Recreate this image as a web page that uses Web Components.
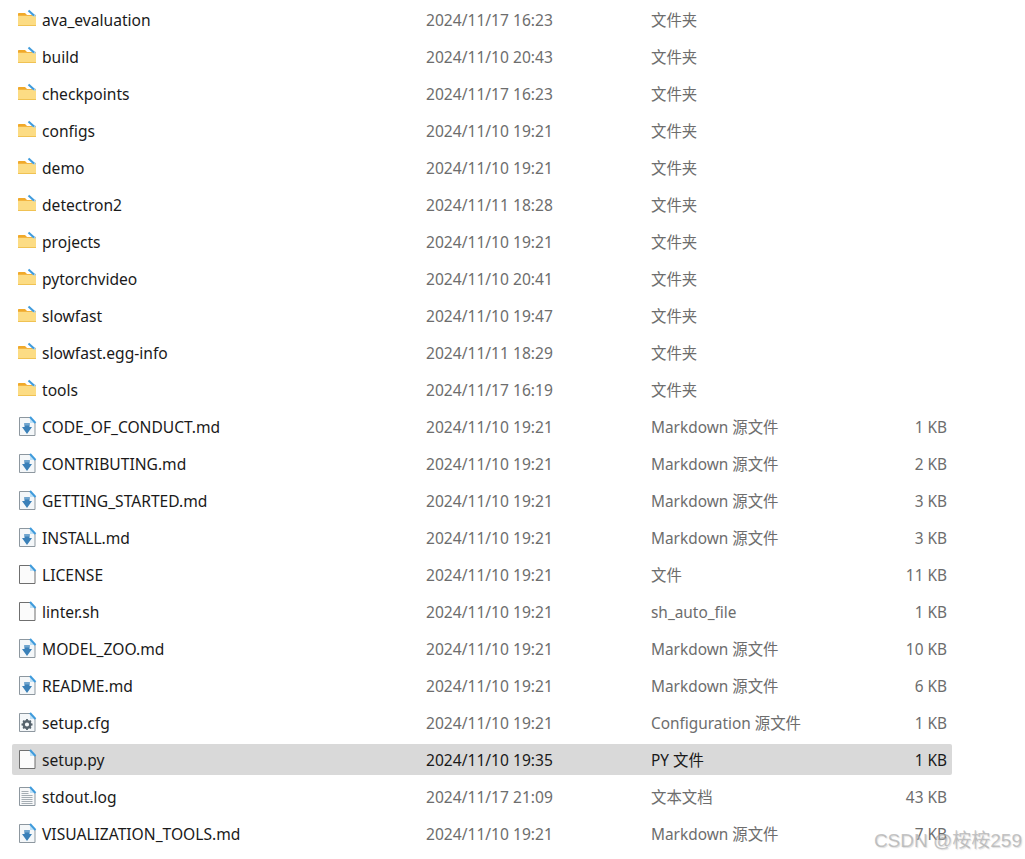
<!DOCTYPE html>
<html>
<head>
<meta charset="utf-8">
<title>files</title>
<style>
  html, body { margin: 0; background: #fff; }
  body { width: 1025px; height: 859px; overflow: hidden; position: relative; }
</style>
</head>
<body>
<file-list>
  <file-row icon="folder" name="ava_evaluation" date="2024/11/17 16:23" type="文件夹"></file-row>
  <file-row icon="folder" name="build" date="2024/11/10 20:43" type="文件夹"></file-row>
  <file-row icon="folder" name="checkpoints" date="2024/11/17 16:23" type="文件夹"></file-row>
  <file-row icon="folder" name="configs" date="2024/11/10 19:21" type="文件夹"></file-row>
  <file-row icon="folder" name="demo" date="2024/11/10 19:21" type="文件夹"></file-row>
  <file-row icon="folder" name="detectron2" date="2024/11/11 18:28" type="文件夹"></file-row>
  <file-row icon="folder" name="projects" date="2024/11/10 19:21" type="文件夹"></file-row>
  <file-row icon="folder" name="pytorchvideo" date="2024/11/10 20:41" type="文件夹"></file-row>
  <file-row icon="folder" name="slowfast" date="2024/11/10 19:47" type="文件夹"></file-row>
  <file-row icon="folder" name="slowfast.egg-info" date="2024/11/11 18:29" type="文件夹"></file-row>
  <file-row icon="folder" name="tools" date="2024/11/17 16:19" type="文件夹"></file-row>
  <file-row icon="md" name="CODE_OF_CONDUCT.md" date="2024/11/10 19:21" type="Markdown 源文件" size="1 KB"></file-row>
  <file-row icon="md" name="CONTRIBUTING.md" date="2024/11/10 19:21" type="Markdown 源文件" size="2 KB"></file-row>
  <file-row icon="md" name="GETTING_STARTED.md" date="2024/11/10 19:21" type="Markdown 源文件" size="3 KB"></file-row>
  <file-row icon="md" name="INSTALL.md" date="2024/11/10 19:21" type="Markdown 源文件" size="3 KB"></file-row>
  <file-row icon="blank" name="LICENSE" date="2024/11/10 19:21" type="文件" size="11 KB"></file-row>
  <file-row icon="blank" name="linter.sh" date="2024/11/10 19:21" type="sh_auto_file" size="1 KB"></file-row>
  <file-row icon="md" name="MODEL_ZOO.md" date="2024/11/10 19:21" type="Markdown 源文件" size="10 KB"></file-row>
  <file-row icon="md" name="README.md" date="2024/11/10 19:21" type="Markdown 源文件" size="6 KB"></file-row>
  <file-row icon="cfg" name="setup.cfg" date="2024/11/10 19:21" type="Configuration 源文件" size="1 KB"></file-row>
  <file-row icon="blank" name="setup.py" date="2024/11/10 19:35" type="PY 文件" size="1 KB" selected></file-row>
  <file-row icon="log" name="stdout.log" date="2024/11/17 21:09" type="文本文档" size="43 KB"></file-row>
  <file-row icon="md" name="VISUALIZATION_TOOLS.md" date="2024/11/10 19:21" type="Markdown 源文件" size="7 KB"></file-row>
</file-list>
<csdn-mark>CSDN @桉桉259</csdn-mark>

<script>
  const FONT = '"Noto Sans", "Noto Sans CJK SC", sans-serif';

  // corner fold with the blue stripe seen on every icon
  const fold = '<path d="M13 2l5 5h-5z" fill="#bfe0f5"/><path d="M13 1l5.500 6" stroke="#3f9bdc" stroke-width="2" fill="none"/>';
  const sheet = (stroke, fill) => `<path d="M2.500 1.500h10.500l5 5v13h-15.500z" fill="${fill}" stroke="${stroke}"/>${fold}`;
  const icons = {
    folder: `<path d="M1 5c0-.6.4-1 1-1h6l2 2h9v2H1z" fill="#f0a92a"/>
      <path d="M1 6.800h18V16.500c0 .3-.2.5-.5.5h-17c-.3 0-.5-.2-.5-.5z" fill="#fcdc84"/>
      <path d="M1 16.500h18" stroke="#f0c253"/>
      <path d="M11 2.500l4 3h3.500V8l-2.500-1z" fill="#a8d2ef"/><path d="M11.500 1.500l5.500 5" stroke="#3f9bdc" stroke-width="2"/>`,
    md: `${sheet('#8d979f', '#f4f7f9')}<path d="M7.500 7h5v4h2.500l-5 7-5-7h2.500z" fill="#3a80b8"/><path d="M7.500 7h5v2.500h-5z" fill="#6fa5cf"/>`,
    blank: sheet('#6f6f6f', '#fbfbfb'),
    cfg: `${sheet('#8d979f', '#f4f7f9')}<circle cx="10" cy="12.500" r="3.300" fill="none" stroke="#56636d" stroke-width="2.400"/><path d="M10 7v2M10 16v2M4.500 12.500h2M13.500 12.500h2M6.100 8.600l1.400 1.400M12.500 15l1.400 1.400M13.900 8.600l-1.400 1.400M7.500 15l-1.400 1.400" stroke="#56636d" stroke-width="1.800"/>`,
    log: `${sheet('#8d979f', '#f7f8f9')}<path d="M4.500 5.500h7M4.500 7.500h7M4.500 9.500h11M4.500 11.500h11M4.500 13.500h11M4.500 15.500h11M4.500 17.500h11" stroke="#a5adb3"/>`
  };

  const rowTpl = document.createElement('template');
  rowTpl.innerHTML = `
    <style>
      :host {
        display: grid;
        grid-template-columns: 25px 384px 225px 1fr auto;
        align-items: start;
        height: 31px;
        padding: 0 5px;
        border-radius: 2px;
        font: 15.6px/33px ${FONT};
        color: #6d6d6d;
      }
      :host([selected]) { background: #d9d9d9; color: #1a1a1a; }
      svg { width: 20px; height: 20px; display: block; align-self: center; margin-top: -3px; }
      .name { color: #1a1a1a; white-space: nowrap; }
      .type { font-size: 15.4px; }
      .size { text-align: right; font-size: 15.4px; }
    </style>
    <svg viewBox="0 0 20 20"></svg>
    <span class="name"></span>
    <span class="date"></span>
    <span class="type"></span>
    <span class="size"></span>
  `;

  class FileRow extends HTMLElement {
    constructor() {
      super();
      this.attachShadow({ mode: 'open' });
      this.shadowRoot.appendChild(rowTpl.content.cloneNode(true));
    }
    connectedCallback() {
      const root = this.shadowRoot;
      root.querySelector('svg').innerHTML = icons[this.getAttribute('icon')];
      for (const key of ['name', 'date', 'type', 'size']) {
        root.querySelector('.' + key).textContent = this.getAttribute(key) || '';
      }
    }
  }
  customElements.define('file-row', FileRow);

  class FileList extends HTMLElement {
    constructor() {
      super();
      this.attachShadow({ mode: 'open' }).innerHTML = `
        <style>
          :host { display: flex; flex-direction: column; gap: 6px; width: 940px; padding: 4px 0 0 12px; }
        </style>
        <slot></slot>
      `;
    }
  }
  customElements.define('file-list', FileList);

  class CsdnMark extends HTMLElement {
    constructor() {
      super();
      this.attachShadow({ mode: 'open' }).innerHTML = `
        <style>
          :host {
            position: absolute; right: 3px; bottom: 6px;
            font: 19px/24px "Liberation Sans", "Noto Sans CJK SC", sans-serif;
            color: rgba(165,165,165,.65);
            text-shadow: 1px 1px 1px rgba(190,190,190,.5);
            white-space: nowrap;
          }
        </style>
        <slot></slot>
      `;
    }
  }
  customElements.define('csdn-mark', CsdnMark);
</script>
</body>
</html>
